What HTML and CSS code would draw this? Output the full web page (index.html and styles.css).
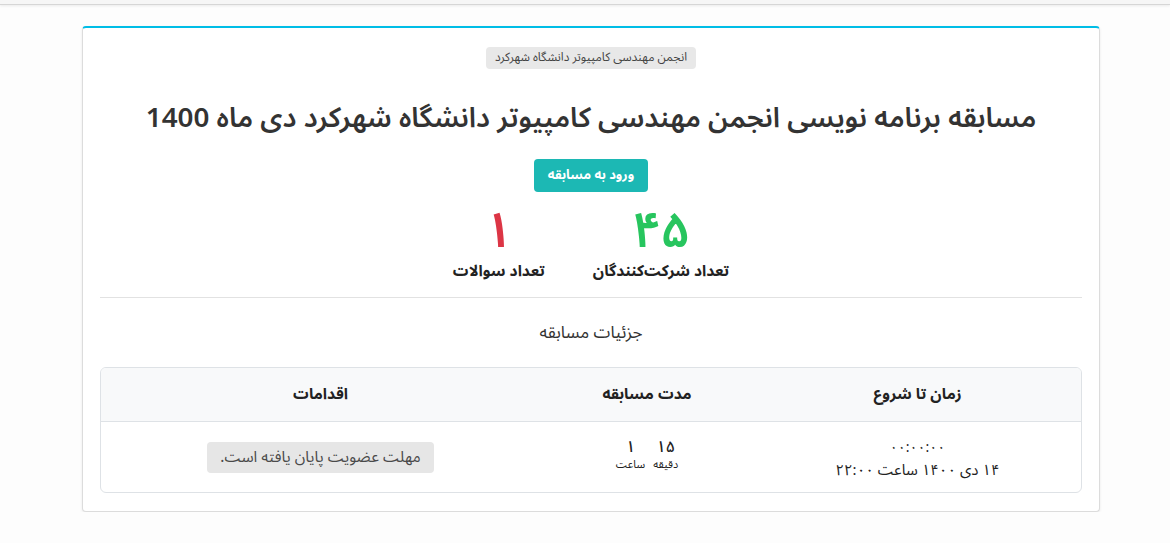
FILE: index.html
```html
<!DOCTYPE html>
<html lang="fa" dir="rtl">
<head>
<meta charset="utf-8">
<title>مسابقه</title>
<link rel="stylesheet" href="styles.css">
</head>
<body>
<div class="topbar"></div>
<main class="page">
  <section class="card">
    <div class="badge-row"><span class="badge">انجمن مهندسی کامپیوتر دانشگاه شهرکرد</span></div>
    <h1 class="title">مسابقه برنامه نویسی انجمن مهندسی کامپیوتر دانشگاه شهرکرد دی ماه 1400</h1>
    <div class="btn-row"><a class="btn-enter">ورود به مسابقه</a></div>
    <div class="stats">
      <div class="stat">
        <div class="stat-num green">۴۵</div>
        <div class="stat-label">تعداد شرکت‌کنندگان</div>
      </div>
      <div class="stat">
        <div class="stat-num red">۱</div>
        <div class="stat-label">تعداد سوالات</div>
      </div>
    </div>
    <hr class="divider">
    <h2 class="subtitle">جزئیات مسابقه</h2>
    <div class="table-wrap">
      <table class="details">
        <thead>
          <tr>
            <th class="c1">زمان تا شروع</th>
            <th class="c2">مدت مسابقه</th>
            <th class="c3">اقدامات</th>
          </tr>
        </thead>
        <tbody>
          <tr>
            <td>
              <div class="countdown">۰۰:۰۰:۰۰</div>
              <div class="date">۱۴ دی ۱۴۰۰ ساعت ۲۲:۰۰</div>
            </td>
            <td>
              <div class="duration">
                <div class="dur"><span class="dur-num">۱۵</span><span class="dur-unit">دقیقه</span></div>
                <div class="dur"><span class="dur-num">۱</span><span class="dur-unit">ساعت</span></div>
              </div>
            </td>
            <td><span class="closed">مهلت عضویت پایان یافته است.</span></td>
          </tr>
        </tbody>
      </table>
    </div>
  </section>
</main>
</body>
</html>
```
FILE: styles.css
```css
* { box-sizing: border-box; }
html, body { margin: 0; padding: 0; }
body {
  background: #fdfdfd;
  font-family: "Noto Sans Arabic", "Vazirmatn", "DejaVu Sans", sans-serif;
  color: #333;
  direction: rtl;
}
.topbar {
  height: 5px;
  background: #f6f6f6;
  border-bottom: 1px solid #d6d6d6;
  box-shadow: 0 1px 3px rgba(0,0,0,0.08);
}
.page {
  padding-top: 21px;
  display: flex;
  justify-content: flex-start;
  direction: ltr;
  padding-left: 82px;
}
.card {
  direction: rtl;
  width: 1018px;
  background: #fff;
  border: 1px solid #dcdcdc;
  border-top: 2px solid #00bde6;
  border-radius: 4px;
  box-shadow: 0 1px 3px rgba(0,0,0,0.08);
  padding: 18px 17px 18px;
}
.badge-row { display: flex; justify-content: center; padding-top: 1px; }
.badge {
  background: #e8e8e8;
  color: #444;
  font-size: 12px;
  line-height: 22px;
  height: 22px;
  padding: 0 9px;
  border-radius: 4px;
}
.title {
  margin: 25px 0 0;
  text-align: center;
  font-size: 27.8px;
  font-weight: 600;
  line-height: 50px;
  color: #333;
}
.btn-row { display: flex; justify-content: center; margin-top: 15px; }
.btn-enter {
  display: inline-block;
  background: #1cb8b4;
  color: #fff;
  font-size: 13px;
  font-weight: bold;
  height: 33px;
  line-height: 33px;
  padding: 0 14px;
  border-radius: 4px;
}
.stats {
  display: flex;
  justify-content: center;
  gap: 48px;
  margin-top: 12px;
}
.stat { display: flex; flex-direction: column; align-items: center; }
.stat-num {
  font-size: 50px;
  line-height: 46px;
  font-weight: 600;
  margin-top: 4px;
}
.green { color: #27c55e; }
.red { color: #dc3545; }
.stat-label {
  font-size: 15.5px;
  font-weight: bold;
  color: #222;
  margin-top: 6px;
  line-height: 22px;
}
.divider {
  border: 0;
  border-top: 1px solid #e2e2e2;
  margin: 15px 0 0;
}
.subtitle {
  margin: 22px 0 0;
  text-align: center;
  font-size: 17px;
  font-weight: normal;
  line-height: 26px;
  color: #333;
}
.table-wrap {
  margin-top: 21px;
  border: 1px solid #dee2e6;
  border-radius: 6px;
  overflow: hidden;
}
.details {
  width: 100%;
  border-collapse: collapse;
  table-layout: fixed;
}
.details th {
  background: #f8f9fa;
  height: 53px;
  font-size: 15.5px;
  font-weight: bold;
  color: #222;
  border-bottom: 1px solid #dee2e6;
  text-align: center;
}
.details .c1 { width: 327px; }
.details .c2 { width: 214px; }
.details td {
  height: 71px;
  text-align: center;
  vertical-align: middle;
  color: #222;
}
.countdown { font-size: 14px; line-height: 20px; letter-spacing: 1px; margin-top: 6px; }
.date { font-size: 15px; line-height: 24px; }
.duration { display: flex; justify-content: center; gap: 8px; margin-top: -4px; }
.dur { display: flex; flex-direction: column; align-items: center; gap: 1px; }
.dur-num { font-size: 16px; line-height: 20px; font-weight: 500; }
.dur-unit { font-size: 11px; line-height: 14px; }
.closed {
  display: inline-block;
  background: #e6e6e6;
  color: #4a4a4a;
  font-size: 15.5px;
  height: 31px;
  line-height: 31px;
  padding: 0 13px;
  border-radius: 4px;
}
```
